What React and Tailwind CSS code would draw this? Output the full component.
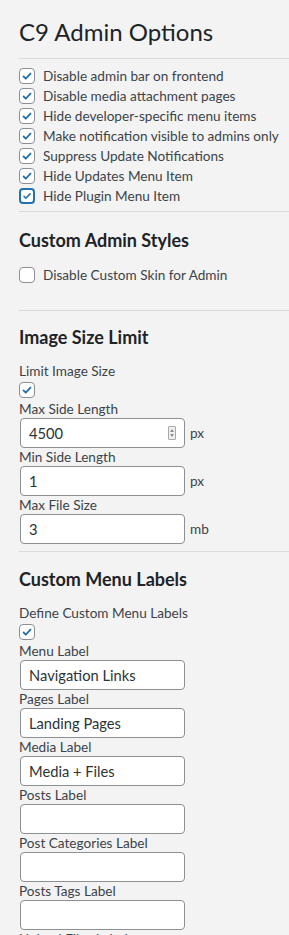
import React from 'react';

const font = { fontFamily: '"Lato", "Liberation Sans", sans-serif' };

const Check = ({ checked = true, focused = false }) => (
  <span className={`w-4 h-4 shrink-0 rounded-[4px] bg-white flex items-center justify-center
      ${focused ? 'border-2 border-[#2271b1]' : 'border border-[#8c8f94]'}`}>
    {checked && (
      <svg viewBox="0 0 20 20" className="w-[14px] h-[14px]">
        <path d="M5 10.5l3.2 3.3L15 6.5" fill="none" stroke="#2271b1" strokeWidth="2.6" strokeLinecap="round" strokeLinejoin="round" />
      </svg>
    )}
  </span>
);

const CheckRow = ({ label, checked, focused }) => (
  <label className="flex items-center gap-[8px] h-5">
    <Check checked={checked} focused={focused} />
    <span className="text-[13.6px] text-[#3c434a]">{label}</span>
  </label>
);

const Field = ({ label, value = '', unit, spinner }) => (
  <div>
    <div className="h-[18px] flex items-center text-[13.6px] text-[#3c434a]">{label}</div>
    <div className="flex items-center gap-[5px]">
      <div className="w-[165px] h-[30px] bg-white border border-[#8c8f94] rounded-[4px] flex items-center pl-[8px] pr-[8px] ml-px">
        <span className="flex-1 text-[14.7px] text-[#2c3338]">{value}</span>
        {spinner && (
          <span className="w-[8px] h-[14px] border border-[#a7aaad] bg-[#f0f0f1] rounded-[1px] flex flex-col items-center justify-center gap-[2px]">
            <span className="w-0 h-0 border-l-[2px] border-r-[2px] border-b-[3px] border-l-transparent border-r-transparent border-b-[#8c8f94]" />
            <span className="w-0 h-0 border-l-[2px] border-r-[2px] border-t-[3px] border-l-transparent border-r-transparent border-t-[#8c8f94]" />
          </span>
        )}
      </div>
      {unit && <span className="text-[13.6px] text-[#3c434a]">{unit}</span>}
    </div>
  </div>
);

export default function App() {
  return (
    <div style={font} className="w-[289px] h-[935px] overflow-hidden bg-[#f3f3f3] text-[#1d2327] pl-[19px]">
      <h1 className="text-[24px] leading-none pt-[20px] pb-[14px] text-[#1d2327]">C9 Admin Options</h1>
      <div className="border-t border-[#dcdcde]" />

      <div className="pt-[7px] pb-[5px] flex flex-col">
        <CheckRow label="Disable admin bar on frontend" />
        <CheckRow label="Disable media attachment pages" />
        <CheckRow label="Hide developer-specific menu items" />
        <CheckRow label="Make notification visible to admins only" />
        <CheckRow label="Suppress Update Notifications" />
        <CheckRow label="Hide Updates Menu Item" />
        <CheckRow label="Hide Plugin Menu Item" focused />
      </div>
      <div className="border-t border-[#dcdcde]" />

      <h2 className="text-[18px] font-bold leading-none pt-[19px] pb-[16px]">Custom Admin Styles</h2>
      <div className="flex flex-col">
        <CheckRow label="Disable Custom Skin for Admin" checked={false} />
      </div>
      <div className="border-t border-[#dcdcde] mt-[25px]" />

      <h2 className="text-[18px] font-bold leading-none pt-[17px] pb-[16px]">Image Size Limit</h2>
      <div className="h-[18px] flex items-center text-[13.6px] text-[#3c434a]">Limit Image Size</div>
      <div className="h-5 flex items-center"><Check /></div>
      <Field label="Max Side Length" value="4500" unit="px" spinner />
      <Field label="Min Side Length" value="1" unit="px" />
      <Field label="Max File Size" value="3" unit="mb" />
      <div className="border-t border-[#dcdcde] mt-[7px]" />

      <h2 className="text-[18px] font-bold leading-none pt-[18px] pb-[16px]">Custom Menu Labels</h2>
      <div className="h-[18px] flex items-center text-[13.6px] text-[#3c434a]">Define Custom Menu Labels</div>
      <div className="h-5 flex items-center"><Check /></div>
      <Field label="Menu Label" value="Navigation Links" />
      <Field label="Pages Label" value="Landing Pages" />
      <Field label="Media Label" value="Media + Files" />
      <Field label="Posts Label" />
      <Field label="Post Categories Label" />
      <Field label="Posts Tags Label" />
      <Field label="Upload Files Label" />
    </div>
  );
}
